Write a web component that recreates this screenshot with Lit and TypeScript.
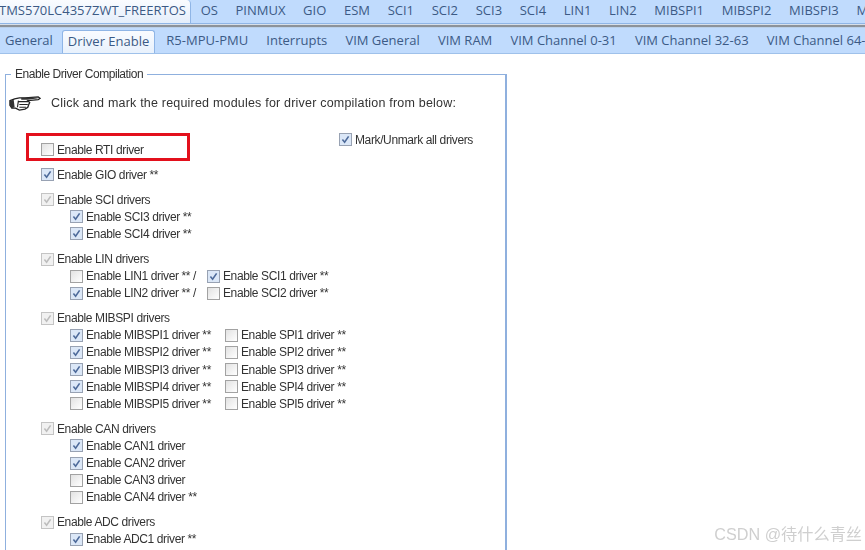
import { css, html, LitElement, svg } from "lit";
import { customElement } from "lit/decorators.js";

type Item = [label: string, state: "on" | "off" | "dim"];

const topTabs = ["OS", "PINMUX", "GIO", "ESM", "SCI1", "SCI2", "SCI3", "SCI4", "LIN1", "LIN2", "MIBSPI1", "MIBSPI2", "MIBSPI3", "MIBSPI4"];
const subTabs = ["R5-MPU-PMU", "Interrupts", "VIM General", "VIM RAM", "VIM Channel 0-31", "VIM Channel 32-63", "VIM Channel 64-95"];

const hand = svg`<svg class="hand" width="32" height="17" viewBox="0 0 34 18">
  <path d="M1 6 L6 4 L11 3 L17 3 L31 2 L33 3.5 L31 5 L20 6 L22 8 L21 10 L20 13 L17 15 L11 16 L7 14 L3 14 L1 11 Z" fill="#fff" stroke="#222" stroke-width="1.4"/>
  <path d="M1 6 L5 5 L6 13 L3 14 L1 11 Z M13 3 L28 2.5 L31 3.5 L20 5 L13 5 Z" fill="#333"/>
  <path d="M10 7 H21 M11 10 H20 M11 13 H18 M10 6 L9 13" stroke="#222" stroke-width="1.2" fill="none"/>
</svg>`;

@customElement("app-root")
export class AppRoot extends LitElement {
  static styles = css`
    :host {
      display: block;
      width: 865px;
      height: 550px;
      overflow: hidden;
      position: relative;
      background: #fff;
      font-family: "Liberation Sans", Arial, sans-serif;
      font-size: 12px;
      color: #333;
    }
    .page {
      filter: blur(0.35px);
    }
    .tabs {
      display: flex;
      overflow: hidden;
      white-space: nowrap;
      background: #c0dbfd;
      font-family: "Open Sans", "Noto Sans", sans-serif;
      font-size: 13px;
      color: #3c5a85;
    }
    .tab {
      flex: none;
    }
    .top {
      height: 23px;
      line-height: 20px;
      border-bottom: 1px solid #8fb5e6;
      gap: 17.65px;
      padding-left: 10px;
    }
    .top .tab.active {
      margin-left: -11px;
      width: 185px;
      height: 23px;
      border-right: 1px solid #8fb5e6;
      border-radius: 0 4px 0 0;
      background: linear-gradient(#fafcff, #e4eefb);
      padding-right: 6px;
    }
    .top .tab.active + .tab {
      margin-left: -8px;
    }
    .rule {
      height: 4px;
      background: linear-gradient(#d6dfea 0, #d6dfea 25%, #8c9299 25%, #8c9299 75%, #b9cfe9 75%);
    }
    .sub {
      height: 26px;
      box-sizing: border-box;
      line-height: 24px;
      border-bottom: 1px solid #9fc1ea;
      padding-left: 5px;
      gap: 18.2px;
    }
    .sub .tab.active {
      margin: 2px -7.2px -1px -9.2px;
      padding: 0 5px;
      height: 25px;
      line-height: 21px;
      border: 1px solid #8fb5e6;
      border-bottom: none;
      border-radius: 3px 3px 0 0;
      background: linear-gradient(#f9fbff, #e6f0fc);
    }
    fieldset {
      margin: 13px 0 0 5px;
      padding: 0 0 0 35px;
      width: 464px;
      height: 600px;
      border: 1px solid #8fb0de;
      border-right-width: 2px;
      box-sizing: content-box;
    }
    legend {
      margin-left: -30px;
      padding: 0 4px;
      line-height: 14px;
      letter-spacing: -0.45px;
    }
    .intro {
      display: flex;
      align-items: center;
      gap: 10px;
      margin: 12px 0 0 -32px;
      height: 20px;
      font-size: 12.5px;
      letter-spacing: 0.2px;
    }
    .hand {
      flex: none;
    }
    .list {
      margin-top: 28px;
      display: flex;
      flex-direction: column;
      gap: 8px;
    }
    .group {
      display: flex;
      flex-direction: column;
    }
    .line {
      display: flex;
      height: 17.1px;
    }
    .kids .line {
      padding-left: 29px;
    }
    .check {
      display: flex;
      align-items: center;
      gap: 3px;
      height: 17.1px;
      white-space: nowrap;
      letter-spacing: -0.38px;
    }
    .box {
      flex: none;
      width: 11px;
      height: 11px;
      border: 1px solid #a2a2a2;
      background: linear-gradient(135deg, #e2e2e2, #fff);
      display: block;
    }
    .box.on {
      background: #dbe7f7;
      border-color: #98a2b3;
    }
    .box.dim {
      background: #f1f1f1;
      border-color: #c4c4c4;
    }
    .box svg {
      display: block;
    }
    .col2-lin {
      width: 137px;
    }
    .col2-spi {
      width: 155px;
    }
    .highlight {
      position: absolute;
      left: 26px;
      top: 133px;
      width: 164px;
      height: 28px;
      border: 3px solid #e3101c;
      box-sizing: border-box;
    }
    .all {
      position: absolute;
      left: 339px;
      top: 131px;
    }
    .mark {
      position: absolute;
      right: 3px;
      bottom: 5px;
      font-family: "Liberation Sans", "Noto Sans CJK SC", sans-serif;
      font-size: 16.2px;
      color: #cfcfcf;
    }
  `;

  box(state: Item[1]) {
    const stroke = state === "dim" ? "#bcbcbc" : "#4d6a9a";
    return html`<span class="box ${state}">
      ${state === "off"
        ? ""
        : svg`<svg width="11" height="11" viewBox="0 0 11 11"><path d="M2.4 5.6 L4.6 8.2 L8.6 2.4" fill="none" stroke="${stroke}" stroke-width="1.6"/></svg>`}
    </span>`;
  }

  check([label, state]: Item) {
    return html`<label class="check">${this.box(state)}${label}</label>`;
  }

  group(head: Item | null, rows: Item[][], colClass = "") {
    return html`<div class="group">
      ${head ? html`<div class="line">${this.check(head)}</div>` : ""}
      <div class="kids">
        ${rows.map(
          (r) => html`<div class="line">
            ${r.length > 1 ? html`<div class=${colClass}>${this.check(r[0])}</div>${this.check(r[1])}` : this.check(r[0])}
          </div>`
        )}
      </div>
    </div>`;
  }

  render() {
    const mib = [1, 2, 3, 4, 5].map((n): Item[] => [
      [`Enable MIBSPI${n} driver **`, n < 5 ? "on" : "off"],
      [`Enable SPI${n} driver **`, "off"],
    ]);
    return html`
      <div class="page">
        <div class="tabs top">
          <span class="tab active">TMS570LC4357ZWT_FREERTOS</span>
          ${topTabs.map((t) => html`<span class="tab">${t}</span>`)}
        </div>
        <div class="rule"></div>
        <div class="tabs sub">
          <span class="tab">General</span>
          <span class="tab active">Driver Enable</span>
          ${subTabs.map((t) => html`<span class="tab">${t}</span>`)}
        </div>
        <fieldset>
          <legend>Enable Driver Compilation</legend>
          <div class="intro">${hand}<span>Click and mark the required modules for driver compilation from below:</span></div>
          <div class="list">
            ${this.group(["Enable RTI driver", "off"], [])}
            ${this.group(["Enable GIO driver **", "on"], [])}
            ${this.group(["Enable SCI drivers", "dim"], [
              [["Enable SCI3 driver **", "on"]],
              [["Enable SCI4 driver **", "on"]],
            ])}
            ${this.group(["Enable LIN drivers", "dim"], [
              [["Enable LIN1 driver ** /", "off"], ["Enable SCI1 driver **", "on"]],
              [["Enable LIN2 driver ** /", "on"], ["Enable SCI2 driver **", "off"]],
            ], "col2-lin")}
            ${this.group(["Enable MIBSPI drivers", "dim"], mib, "col2-spi")}
            ${this.group(["Enable CAN drivers", "dim"], [
              [["Enable CAN1 driver", "on"]],
              [["Enable CAN2 driver", "on"]],
              [["Enable CAN3 driver", "off"]],
              [["Enable CAN4 driver **", "off"]],
            ])}
            ${this.group(["Enable ADC drivers", "dim"], [
              [["Enable ADC1 driver **", "on"]],
            ])}
          </div>
        </fieldset>
        <div class="all">${this.check(["Mark/Unmark all drivers", "on"])}</div>
        <div class="highlight"></div>
      </div>
      <div class="mark">CSDN @待什么青丝</div>
    `;
  }
}
